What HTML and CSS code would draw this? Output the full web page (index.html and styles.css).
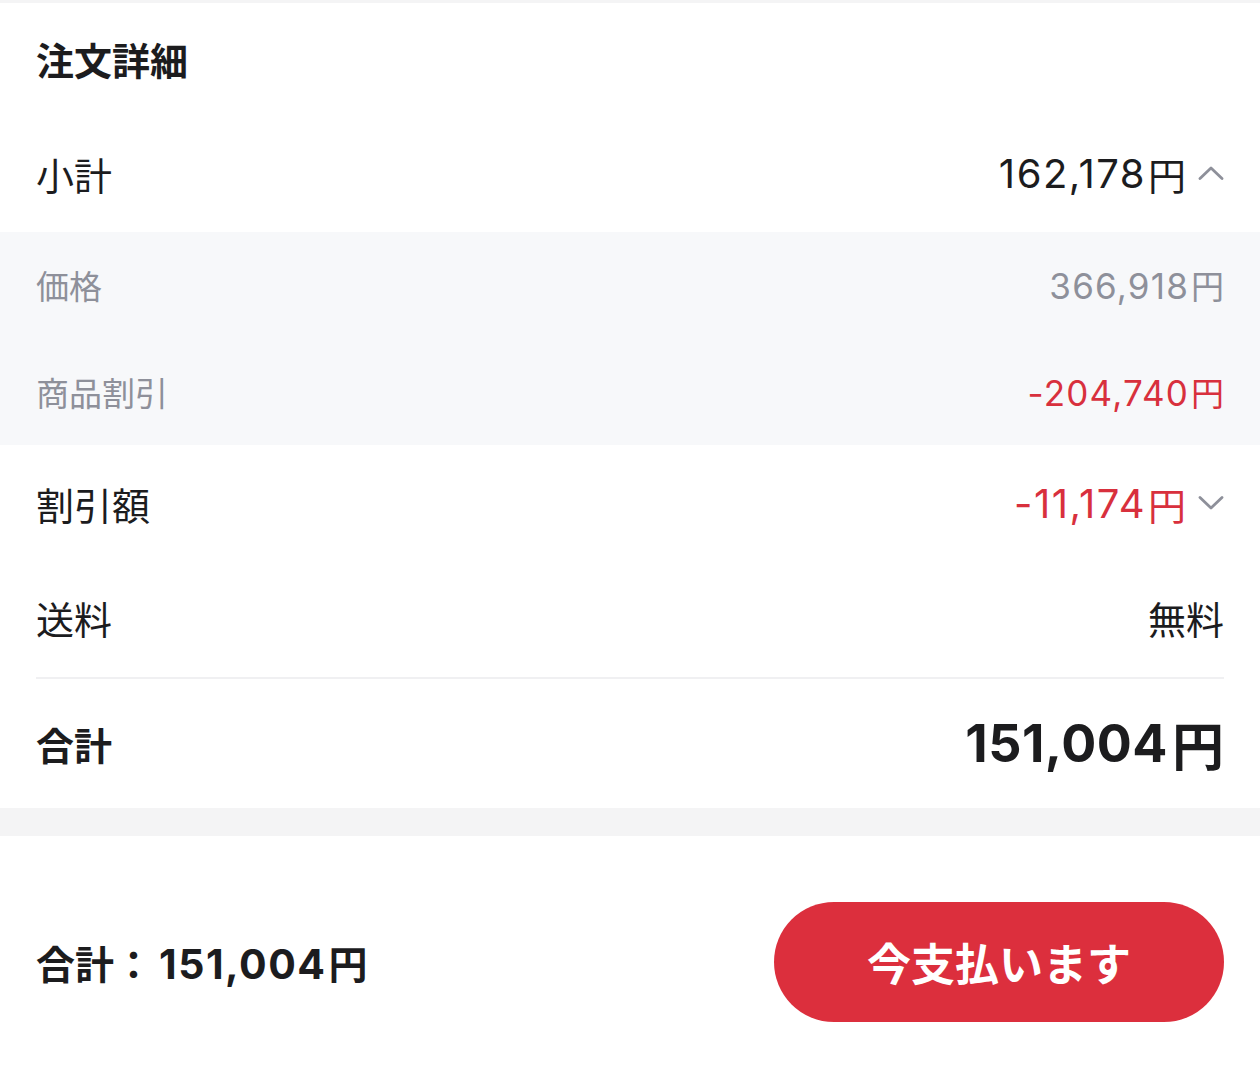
FILE: index.html
```html
<!DOCTYPE html>
<html lang="ja">
<head>
  <meta charset="UTF-8">
  <title>注文詳細</title>
  <link rel="stylesheet" href="styles.css">
</head>
<body>

  <div class="top-strip"></div>

  <div class="detail">
    <h2 class="detail-title">注文詳細</h2>

    <div class="row row-sub">
      <span class="label">小計</span>
      <span class="value"><span class="num">162,178</span>円
        <svg class="chev" viewBox="0 0 26 14"><path d="M2 12.5 L13 2 L24 12.5"/></svg>
      </span>
    </div>
  </div>

  <div class="sub">
    <div class="sub-row">
      <span>価格</span>
      <span><span class="num">366,918</span>円</span>
    </div>
    <div class="sub-row">
      <span>商品割引</span>
      <span class="red"><span class="num">-204,740</span>円</span>
    </div>
  </div>

  <div class="detail">
    <div class="row row-disc">
      <span class="label">割引額</span>
      <span class="value red"><span class="num">-11,174</span>円
        <svg class="chev" viewBox="0 0 26 14"><path d="M2 1.5 L13 12 L24 1.5"/></svg>
      </span>
    </div>

    <div class="row row-ship">
      <span class="label">送料</span>
      <span class="value">無料</span>
    </div>

    <div class="row total">
      <span class="label">合計</span>
      <span class="value"><span class="num">151,004</span>円</span>
    </div>
  </div>

  <div class="gap"></div>

  <div class="pay-bar">
    <div class="pay-total">合計：<span class="num">151,004</span>円</div>
    <button class="pay-btn" type="button">今支払います</button>
  </div>

</body>
</html>
```

FILE: styles.css
```css
body {
  margin: 0;
  background: #ffffff;
  color: #1c1c1e;
  font-family: Inter, "Noto Sans CJK JP", sans-serif;
}

.top-strip {
  height: 3px;
  background: #f4f4f5;
}

.detail {
  padding: 0 36px;
}

.detail-title {
  margin: 0;
  height: 111px;
  display: flex;
  align-items: center;
  font-size: 38px;
  font-weight: 700;
}

.row {
  display: flex;
  justify-content: space-between;
  align-items: center;
  height: 112px;
  font-size: 38px;
}

.row-sub {
  height: 118px;
}

.value {
  display: flex;
  align-items: center;
}

.num {
  font-size: 40px;
  letter-spacing: 1.5px;
  margin-right: 2px;
}

.chev {
  width: 26px;
  height: 14px;
  margin-left: 12px;
  fill: none;
  stroke: #8e909a;
  stroke-width: 2.8;
  stroke-linecap: round;
  stroke-linejoin: round;
}

.red {
  color: #d8303d;
}

.sub {
  background: #f7f8fa;
  padding: 0 36px;
  color: #8e909a;
}

.sub-row {
  display: flex;
  justify-content: space-between;
  align-items: center;
  height: 106.5px;
  font-size: 33px;
}

.sub-row .num {
  font-size: 35px;
  letter-spacing: 1.2px;
}

.row-disc {
  height: 116px;
}

.row-ship {
  box-sizing: border-box;
  height: 118px;
  padding-bottom: 4px;
  border-bottom: 2px solid #f0f0f2;
}

.total {
  height: 129px;
  font-weight: 700;
}

.total .value {
  font-size: 52px;
}

.total .num {
  font-size: 52px;
  letter-spacing: 0.5px;
  margin-right: 4px;
}

.gap {
  height: 28px;
  background: #f4f4f5;
}

.pay-bar {
  display: flex;
  justify-content: space-between;
  align-items: center;
  padding: 66px 36px 58px;
}

.pay-total {
  font-size: 39px;
  font-weight: 700;
}

.pay-total .num {
  font-size: 41px;
  letter-spacing: 1.5px;
  margin-left: 6px;
}

.pay-btn {
  width: 450px;
  height: 120px;
  border: none;
  border-radius: 60px;
  background: #dc2f3d;
  color: #ffffff;
  font-family: inherit;
  font-size: 44px;
  font-weight: 700;
}
```
